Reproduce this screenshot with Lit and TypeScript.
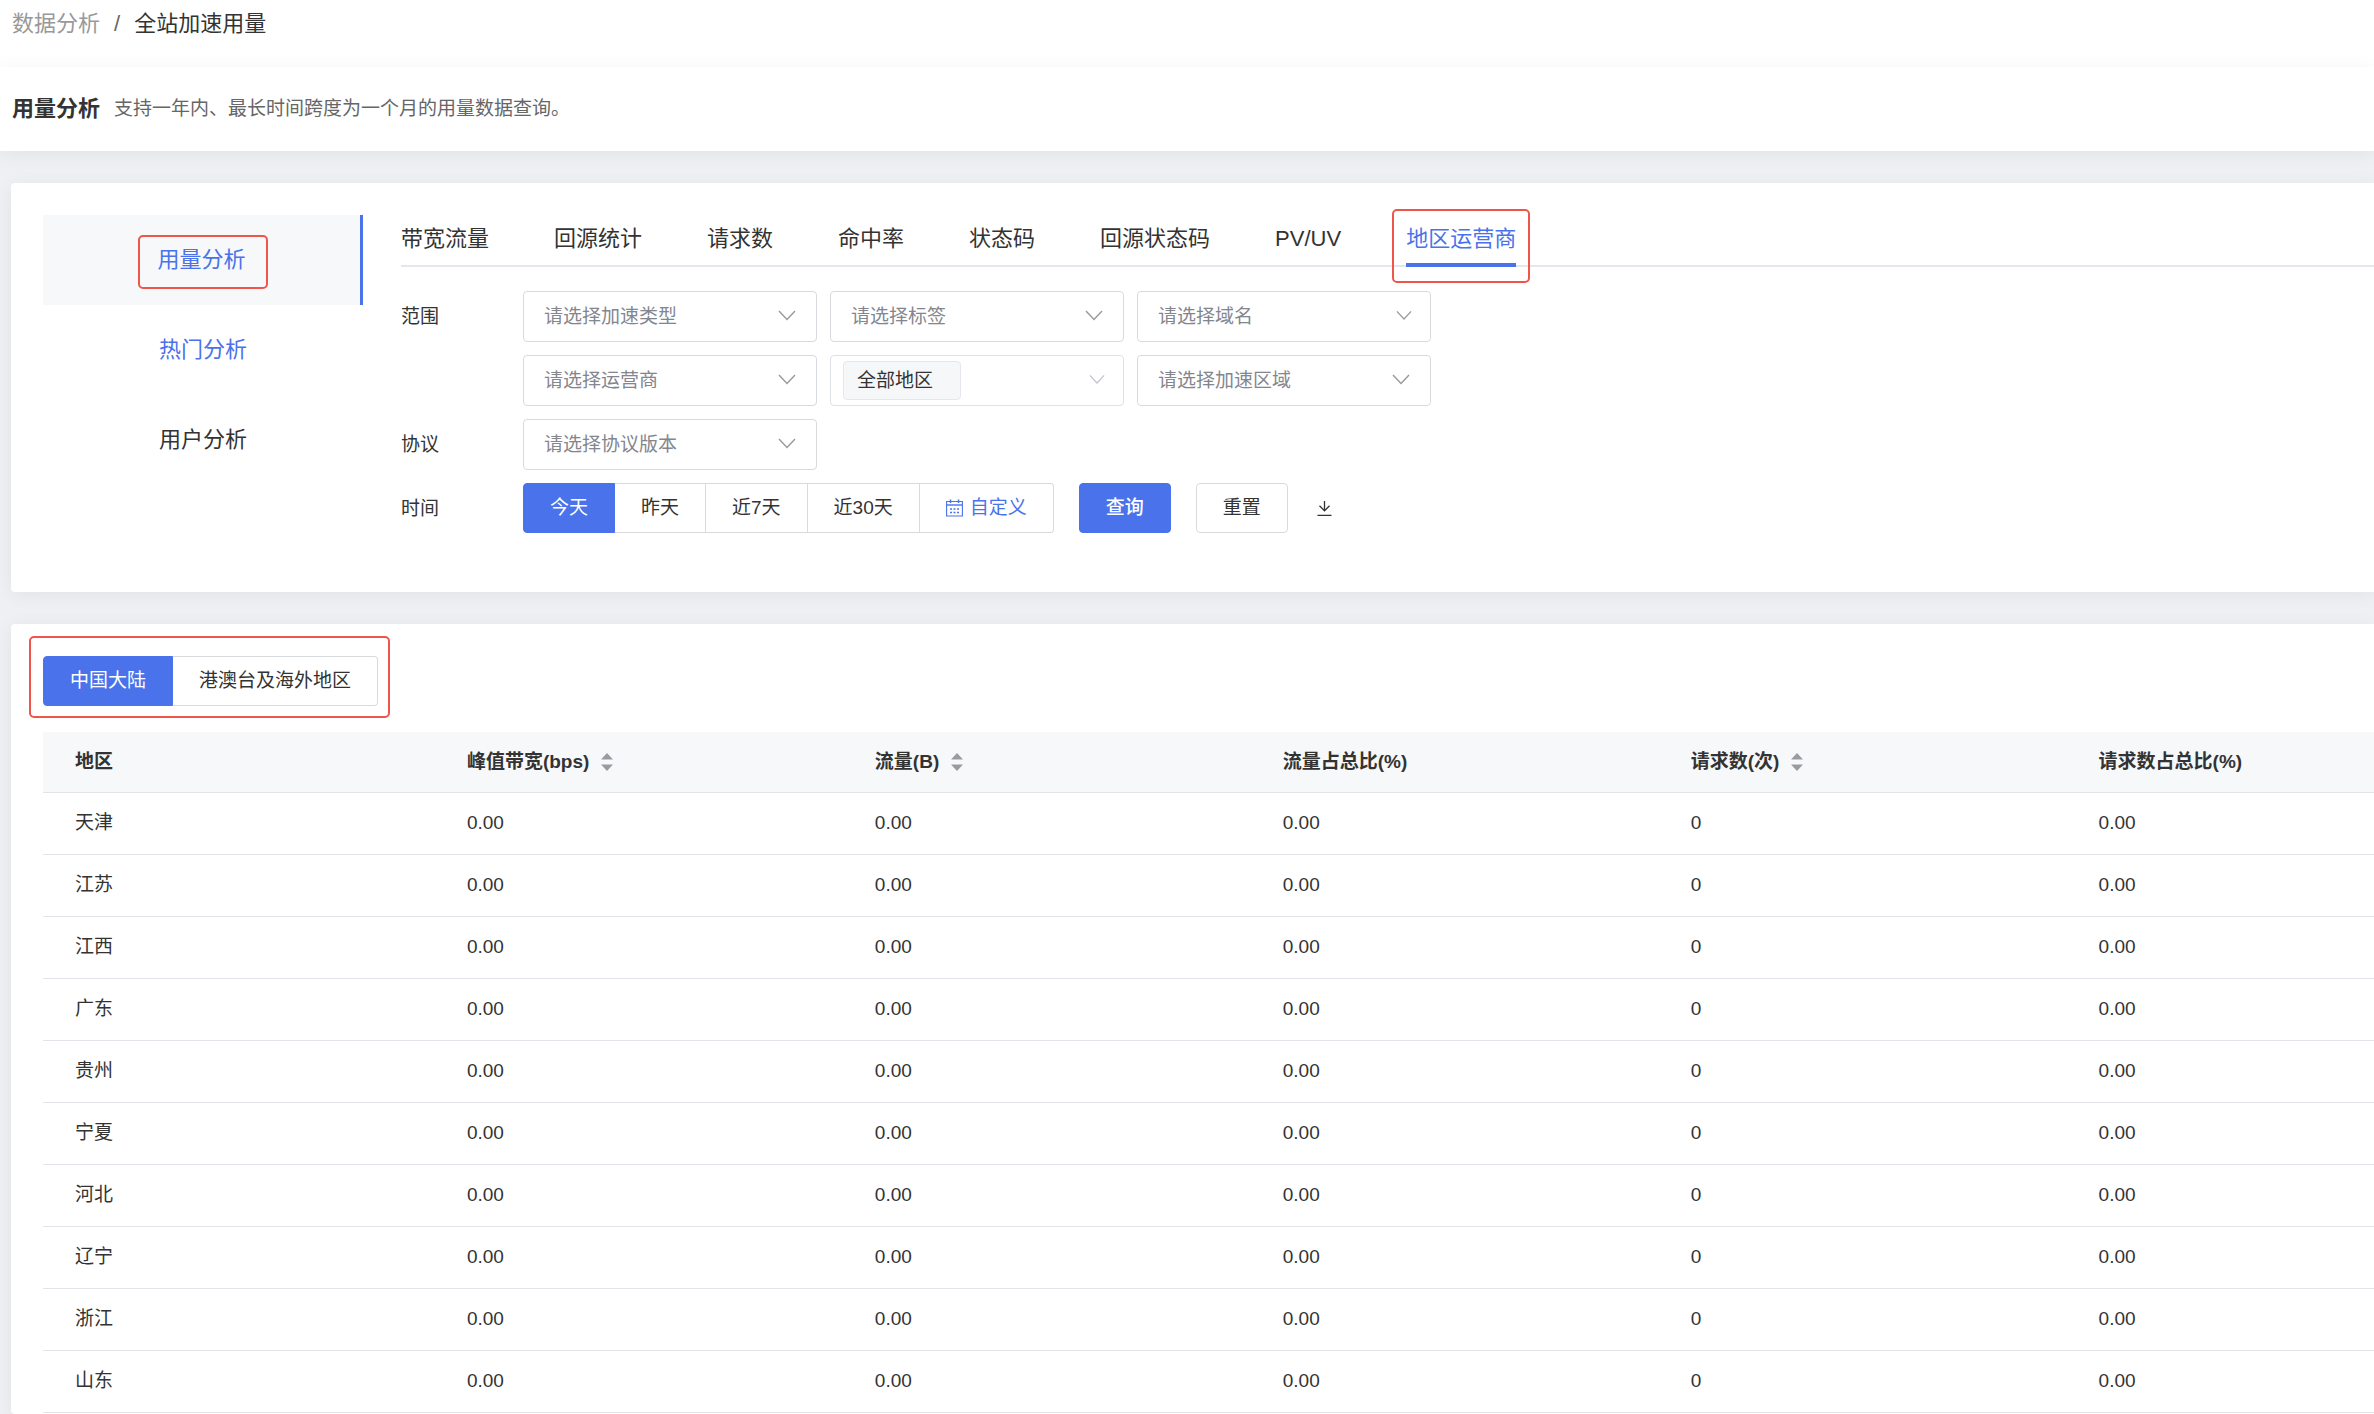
import { LitElement, html, css, nothing } from "lit";
import { customElement, property, state } from "lit/decorators.js";
import { classMap } from "lit/directives/class-map.js";

interface Field {
  id: string;
  label: string;
  tone?: "light" | "small";
  tag?: boolean;
}

interface Column {
  title: string;
  sortable: boolean;
}

const SIDE_ITEMS = ["用量分析", "热门分析", "用户分析"];

const TABS = ["带宽流量", "回源统计", "请求数", "命中率", "状态码", "回源状态码", "PV/UV", "地区运营商"];

const SCOPE_FIELDS: Field[] = [
  { id: "type", label: "请选择加速类型" },
  { id: "tag", label: "请选择标签" },
  { id: "domain", label: "请选择域名", tone: "small" },
  { id: "isp", label: "请选择运营商" },
  { id: "region", label: "全部地区", tone: "light", tag: true },
  { id: "area", label: "请选择加速区域" },
];

const PROTOCOL_FIELDS: Field[] = [{ id: "protocol", label: "请选择协议版本" }];

const RANGES = ["今天", "昨天", "近7天", "近30天", "自定义"];

const COLUMNS: Column[] = [
  { title: "地区", sortable: false },
  { title: "峰值带宽(bps)", sortable: true },
  { title: "流量(B)", sortable: true },
  { title: "流量占总比(%)", sortable: false },
  { title: "请求数(次)", sortable: true },
  { title: "请求数占总比(%)", sortable: false },
];

const REGIONS = ["天津", "江苏", "江西", "广东", "贵州", "宁夏", "河北", "辽宁", "浙江", "山东"];

@customElement("select-field")
class SelectField extends LitElement {
  @property({ attribute: false }) field!: Field;

  static styles = css`
    :host {
      display: block;
    }
    .box {
      display: grid;
      grid-template-columns: 1fr 38px;
      align-items: center;
      box-sizing: border-box;
      height: 51px;
      border: 1px solid #d9dadd;
      border-radius: 4px;
      background: #fff;
    }
    .tagged {
      border-color: #dfe1e8;
    }
    select {
      grid-area: 1 / 1 / 2 / 3;
      box-sizing: border-box;
      width: 100%;
      height: 49px;
      margin: 0;
      padding: 0 38px 0 20px;
      border: 0;
      border-radius: 4px;
      appearance: none;
      background: transparent;
      color: #83868f;
      font: inherit;
    }
    .tagged select {
      width: 118px;
      height: 39px;
      margin-left: 12px;
      padding: 0 12px 0 13px;
      border: 1px solid #e4e7ed;
      background: #f6f7f9;
      color: #333;
    }
    svg {
      grid-area: 1 / 2 / 2 / 3;
      display: block;
      width: 18px;
      height: 18px;
      margin-bottom: 4px;
      fill: none;
      stroke: #999;
      stroke-width: 1.4;
      pointer-events: none;
    }
    .small {
      width: 16px;
      height: 16px;
      margin-left: 4px;
    }
    .light {
      stroke: #c0c4cc;
    }
  `;

  render() {
    const { id, label, tag, tone } = this.field;
    return html`
      <div class=${classMap({ box: true, tagged: !!tag })}>
        <select id=${id} aria-label=${label}>
          <option>${label}</option>
        </select>
        <svg class=${classMap({ small: !!tone, light: tone === "light" })} viewBox="0 0 18 18" aria-hidden="true">
          <path d="M1 5 L9 13.5 L17 5" />
        </svg>
      </div>
    `;
  }
}

@customElement("app-root")
class AppRoot extends LitElement {
  @state() private tab = "地区运营商";
  @state() private range = "今天";
  @state() private area = "中国大陆";

  static styles = css`
    :host {
      display: flex;
      flex-direction: column;
      min-height: 100vh;
      background: #eff0f4;
      color: #333;
      font-family: "Liberation Sans", "Noto Sans CJK SC", sans-serif;
      font-size: 19px;
      line-height: 28px;
      overflow-x: hidden;
    }
    button {
      margin: 0;
      font: inherit;
      color: inherit;
      cursor: pointer;
    }
    a {
      color: inherit;
      text-decoration: none;
    }
    .crumbs {
      display: flex;
      gap: 14px;
      box-sizing: border-box;
      height: 67px;
      padding: 8px 12px;
      background: #fff;
      font-size: 22px;
      line-height: 32px;
    }
    .crumb-parent {
      color: #999;
    }
    .crumb-slash {
      color: #666;
    }
    .title-bar {
      display: flex;
      align-items: center;
      gap: 14px;
      height: 84px;
      padding: 0 12px;
      background: #fff;
      box-shadow: 0 3px 19px rgba(0, 0, 0, 0.06);
    }
    h1 {
      margin: 0;
      font-size: 22px;
      line-height: 32px;
    }
    .hint {
      margin: 0;
      color: #666;
      line-height: 30px;
    }
    .card {
      margin: 32px 0 0 11px;
      border-radius: 4px 0 0 4px;
      background: #fff;
      box-shadow: 0 3px 19px rgba(0, 0, 0, 0.06);
    }
    .filters {
      display: flex;
      gap: 38px;
      box-sizing: border-box;
      min-height: 409px;
      padding: 32px 0 32px 32px;
    }
    .side {
      flex: none;
      width: 320px;
      font-size: 22px;
    }
    .side-item {
      display: flex;
      align-items: center;
      justify-content: center;
      height: 90px;
    }
    .side-active {
      box-sizing: border-box;
      border-right: 3px solid #4a72eb;
      background: #f7f8fa;
    }
    .link {
      color: #4a72eb;
    }
    .marked {
      position: relative;
    }
    .mark {
      position: absolute;
      border: 2px solid #f0554a;
      border-radius: 5px;
      pointer-events: none;
    }
    .mark-side {
      inset: -11px -22px -15px -19px;
    }
    .mark-tab {
      inset: -6px -14px -20px -14px;
    }
    .mark-area {
      inset: -20px -12px -12px -14px;
    }
    .main {
      flex: 1;
      min-width: 0;
    }
    .tabs {
      display: flex;
      gap: 65px;
      height: 50px;
      border-bottom: 2px solid #e3e6ec;
      font-size: 22px;
    }
    .tab {
      box-sizing: border-box;
      height: 52px;
      padding: 0;
      border: 0;
      border-bottom: 4px solid transparent;
      background: none;
      white-space: nowrap;
    }
    .tab-active {
      border-color: #4a72eb;
      color: #4a72eb;
    }
    .row {
      display: flex;
      margin-top: 13px;
    }
    .row-first {
      margin-top: 24px;
    }
    .row-label {
      flex: none;
      width: 122px;
      line-height: 52px;
      height: 50px;
    }
    .fields {
      display: grid;
      grid-template-columns: repeat(3, 294px);
      gap: 13px;
    }
    .group {
      display: flex;
    }
    .btn {
      display: flex;
      align-items: center;
      justify-content: center;
      gap: 7px;
      box-sizing: border-box;
      height: 50px;
      padding: 0 26px;
      border: 1px solid #d9dadd;
      border-radius: 4px;
      background: #fff;
      white-space: nowrap;
    }
    .group .btn {
      border-radius: 0;
    }
    .group .btn + .btn {
      border-left: 0;
    }
    .group .btn:first-child {
      border-radius: 4px 0 0 4px;
    }
    .group .btn:last-child {
      border-radius: 0 4px 4px 0;
    }
    .btn.primary {
      border-color: #4a72eb;
      background: #4a72eb;
      color: #fff;
    }
    .strong {
      font-weight: 500;
    }
    .actions {
      display: flex;
      align-items: center;
      gap: 25px;
      margin-left: 25px;
    }
    .icon-btn {
      display: flex;
      padding: 3px;
      border: 0;
      background: none;
    }
    .icon {
      display: block;
      width: 17px;
      height: 18px;
      fill: none;
      stroke: currentColor;
    }
    .results {
      flex: 1;
      padding: 32px 0 0 32px;
    }
    .areas {
      display: inline-flex;
      vertical-align: top;
    }
    table {
      width: 100%;
      margin-top: 26px;
      border-collapse: separate;
      border-spacing: 0;
      table-layout: fixed;
    }
    .col {
      width: 17.5%;
    }
    th,
    td {
      box-sizing: border-box;
      height: 62px;
      padding: 0 16px 2px;
      border-bottom: 1px solid #e3e4ea;
      text-align: left;
      white-space: nowrap;
    }
    th {
      height: 61px;
      padding-bottom: 0;
      background: #f7f8fa;
    }
    th:first-child,
    td:first-child {
      padding-left: 32px;
    }
    .head {
      display: flex;
      align-items: center;
      gap: 12px;
    }
    .sort {
      display: flex;
      padding: 0;
      border: 0;
      background: none;
    }
    .sort svg {
      display: block;
      width: 12px;
      height: 18px;
      fill: #999b9f;
    }
  `;

  private calendarIcon() {
    return html`<svg class="icon" viewBox="0 0 17 18" aria-hidden="true">
      <path d="M.6 2.500h15.800v14.500H.6z" stroke-width="1.1" />
      <path d="M.6 6h15.800" stroke-width="2" stroke-opacity=".7" />
      <path d="M4.500 .5v3.500 M12.500 .5v3.500" stroke-width="1.5" />
      <path d="M4 10h2 M7.500 10h2 M11 10h2 M4 13.500h2 M7.500 13.500h2 M11 13.500h2" stroke-width="1.4" />
    </svg>`;
  }

  private downloadIcon() {
    return html`<svg class="icon" viewBox="0 0 17 18" aria-hidden="true">
      <path d="M8.500 2v9.500 M3.500 6.800l5 5 5-5 M1.500 16.300h14" stroke-width="1.3" />
    </svg>`;
  }

  private renderTab(name: string) {
    const active = name === this.tab;
    return html`<button
      class=${classMap({ tab: true, "tab-active": active, marked: name === "地区运营商" })}
      @click=${() => (this.tab = name)}
    >${name}${name === "地区运营商" ? html`<span class="mark mark-tab"></span>` : nothing}</button>`;
  }

  private renderSide(name: string, index: number) {
    return html`<a href="#" class=${classMap({ "side-item": true, "side-active": index === 0, link: index < 2 })}>
      <span class=${classMap({ marked: index === 0 })}>${name}${index === 0
        ? html`<span class="mark mark-side"></span>`
        : nothing}</span>
    </a>`;
  }

  private renderFields(fields: Field[]) {
    return html`<div class="fields">
      ${fields.map((field) => html`<select-field .field=${field}></select-field>`)}
    </div>`;
  }

  render() {
    return html`
      <nav class="crumbs">
        <a class="crumb-parent" href="#">数据分析</a>
        <span class="crumb-slash">/</span>
        <span>全站加速用量</span>
      </nav>
      <header class="title-bar">
        <h1>用量分析</h1>
        <p class="hint">支持一年内、最长时间跨度为一个月的用量数据查询。</p>
      </header>

      <section class="card filters">
        <nav class="side">${SIDE_ITEMS.map((name, i) => this.renderSide(name, i))}</nav>
        <div class="main">
          <div class="tabs">${TABS.map((name) => this.renderTab(name))}</div>
          <div class="row row-first">
            <span class="row-label">范围</span>
            ${this.renderFields(SCOPE_FIELDS)}
          </div>
          <div class="row">
            <span class="row-label">协议</span>
            ${this.renderFields(PROTOCOL_FIELDS)}
          </div>
          <div class="row">
            <span class="row-label">时间</span>
            <div class="group">
              ${RANGES.map(
                (name) => html`<button
                  class=${classMap({ btn: true, primary: name === this.range, link: name === "自定义" })}
                  @click=${() => (this.range = name)}
                >${name === "自定义" ? this.calendarIcon() : nothing}<span>${name}</span></button>`
              )}
            </div>
            <div class="actions">
              <button class="btn primary strong">查询</button>
              <button class="btn">重置</button>
              <button class="icon-btn" aria-label="下载">${this.downloadIcon()}</button>
            </div>
          </div>
        </div>
      </section>

      <section class="card results">
        <div class="areas marked">
          <div class="group">
            ${["中国大陆", "港澳台及海外地区"].map(
              (name) => html`<button
                class=${classMap({ btn: true, primary: name === this.area })}
                @click=${() => (this.area = name)}
              >${name}</button>`
            )}
          </div>
          <span class="mark mark-area"></span>
        </div>
        <table>
          <colgroup>
            ${COLUMNS.map((_, i) => html`<col class=${i < COLUMNS.length - 1 ? "col" : ""} />`)}
          </colgroup>
          <thead>
            <tr>
              ${COLUMNS.map(
                (column) => html`<th scope="col">
                  <div class="head">
                    <span>${column.title}</span>
                    ${column.sortable
                      ? html`<button class="sort" aria-label="排序">
                          <svg viewBox="0 0 12 18" aria-hidden="true">
                            <path d="M6 0l6 6.5H0z M0 11.500h12l-6 6.500z" />
                          </svg>
                        </button>`
                      : nothing}
                  </div>
                </th>`
              )}
            </tr>
          </thead>
          <tbody>
            ${REGIONS.map(
              (region) => html`<tr>
                <td>${region}</td>
                <td>0.00</td>
                <td>0.00</td>
                <td>0.00</td>
                <td>0</td>
                <td>0.00</td>
              </tr>`
            )}
          </tbody>
        </table>
      </section>
    `;
  }
}
